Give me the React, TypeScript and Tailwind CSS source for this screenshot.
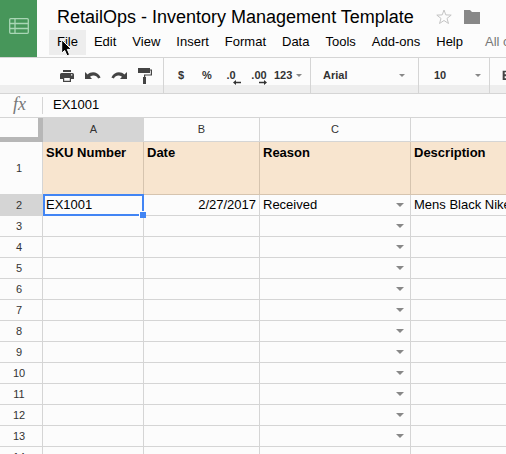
import React from "react";
import { MdFormatBold } from "react-icons/md";

interface RowItem {
  id: number;
  sku?: string;
  date?: string;
  reason?: string;
  description?: string;
}

const menuItems = ["File", "Edit", "View", "Insert", "Format", "Data", "Tools", "Add-ons", "Help"];

const rows: RowItem[] = [
  { id: 2, sku: "EX1001", date: "2/27/2017", reason: "Received", description: "Mens Black Nike Shoes" },
  ...Array.from({ length: 13 }, (_, i) => ({ id: i + 3 })),
];

const cell = "relative border-r border-b border-[#d5d5d5] p-0 px-[3px] whitespace-nowrap";
const titleCell = "border-r border-b border-[#d6c4af] bg-[#f8e5cf] p-0 px-[3px] pt-px text-left align-top font-bold";
const toolButton = "flex h-6 w-[26px] items-center justify-center";

const Caret: React.FC<{ className?: string }> = ({ className }) => (
  <svg className={className} viewBox="0 0 8 4" aria-hidden="true">
    <path d="M0 0h8L4 4z" fill="currentColor" />
  </svg>
);

const Header: React.FC = () => (
  <header className="flex h-[58px] shrink-0 border-b border-[#d5d5d5]">
    <a href="#home" aria-label="Sheets home" className="flex w-[37px] shrink-0 justify-center bg-[#47965a] pt-[18px]">
      <svg width="20" height="16" viewBox="0 0 20 16" fill="none" stroke="#a9d6b5" strokeWidth="1.3">
        <rect x="0.7" y="0.7" width="18.6" height="14.6" rx="1" />
        <path d="M1 5.500h18M1 10.500h18M6 1v14" />
      </svg>
    </a>
    <div className="min-w-0 flex-1 pl-3">
      {/* Document name */}
      <div className="flex h-[30px] items-center pt-1 pl-2">
        <h1 className="text-[18px] leading-6 whitespace-nowrap">RetailOps - Inventory Management Template</h1>
        <button type="button" aria-label="Star" className="ml-[22px] shrink-0">
          <svg width="16" height="16" viewBox="0 0 16 16" fill="none" stroke="#c4c4c4" strokeWidth="1">
            <path d="M8 1l1.800 4.900 5.400.2-4.200 3.300 1.500 5.100L8 11.500l-4.500 3 1.500-5.100L.8 6.100l5.400-.2z" />
          </svg>
        </button>
        <button type="button" aria-label="Move to folder" className="ml-3 shrink-0">
          <svg width="16" height="14" viewBox="0 0 16 14" fill="#888">
            <path d="M0 0h6l2 2h8v12H0z" />
          </svg>
        </button>
      </div>

      {/* Menu bar */}
      <nav className="flex h-[25px] items-stretch text-[13px]">
        {menuItems.map((item, index) => (
          <button
            key={item}
            type="button"
            className={
              index === 0
                ? "relative shrink-0 bg-[#ededed] px-2 pb-[2px]"
                : "shrink-0 px-2 pb-[2px] whitespace-nowrap"
            }
          >
            {item}
            {index === 0 && (
              <svg className="absolute top-[9px] left-3" width="12" height="18" viewBox="0 0 12 18" aria-hidden="true">
                <path
                  d="M.7.8v13.4l3-2.8 2.3 5.4 2.6-1.1-2.3-5.3h4.2z"
                  fill="#000"
                  stroke="#fff"
                  strokeWidth="1"
                />
              </svg>
            )}
          </button>
        ))}
        <a href="#history" className="flex items-center pb-[2px] pl-[14px] whitespace-nowrap text-[#777]">
          All changes saved in Drive
        </a>
      </nav>
    </div>
  </header>
);

const Toolbar: React.FC = () => (
  <div className="flex h-9 shrink-0 border-b border-[#d5d5d5] bg-[linear-gradient(to_bottom,#fcfcfc_27px,#eee_27px)] text-[11px] font-bold text-[#333]">
    <div className="flex w-[164px] shrink-0 items-center border-r border-[#d5d5d5] pl-[54px] text-[#444]">
      <button type="button" aria-label="Print" className={toolButton}>
        <svg width="14" height="12" viewBox="0 0 14 12" fill="currentColor">
          <path d="M3 0h8v2H3z" />
          <path fillRule="evenodd" d="M1.500 3h11Q14 3 14 4.500V9h-3V7H3v2H0V4.500Q0 3 1.500 3zM11 4.200v1.200h1.300V4.200z" />
          <path fillRule="evenodd" d="M3 7h8v5H3zM4.200 8v2.800h5.600V8z" />
        </svg>
      </button>
      <button type="button" aria-label="Undo" className={toolButton}>
        <svg width="16" height="8" viewBox="0 0 16 8" fill="currentColor">
          <path d="M0 0l2.600 2.400C6-.6 12.500-.8 15.600 5.400l-2.500 1C11.200 3 8 2.800 5 4.800L7 7H0z" />
        </svg>
      </button>
      <button type="button" aria-label="Redo" className={toolButton}>
        <svg width="16" height="8" viewBox="0 0 16 8" fill="currentColor">
          <path d="M16 0l-2.600 2.400C10-.6 3.500-.8.4 5.400l2.500 1C4.800 3 8 2.800 11 4.800L9 7h7z" />
        </svg>
      </button>
      <button type="button" aria-label="Paint format" className={toolButton}>
        <svg width="14" height="16" viewBox="0 0 14 16" fill="currentColor">
          <path d="M0 0h12v5H0z" />
          <path d="M12 2h1.400v5H6.600v3" fill="none" stroke="currentColor" strokeWidth="1.200" />
          <path d="M5 9h3v7H5z" />
        </svg>
      </button>
    </div>

    <div className="flex w-[147px] shrink-0 items-center border-r border-[#d5d5d5] pl-1">
      <button type="button" className={toolButton}>$</button>
      <button type="button" className={toolButton}>%</button>
      <button type="button" aria-label="Decrease decimal places" className={`${toolButton} relative`}>
        <span className="pr-1">.0</span>
        <svg className="absolute right-[5px] bottom-[3px]" width="8" height="5" viewBox="0 0 8 5" fill="currentColor">
          <path d="M0 2.500L3 0v1.800h5v1.400H3V5z" />
        </svg>
      </button>
      <button type="button" aria-label="Increase decimal places" className={`${toolButton} relative`}>
        <span>.00</span>
        <svg className="absolute right-[5px] bottom-[3px]" width="8" height="5" viewBox="0 0 8 5" fill="currentColor">
          <path d="M8 2.500L5 0v1.800H0v1.400h5V5z" />
        </svg>
      </button>
      <button type="button" className="flex items-center gap-1 pl-[2px]">
        123
        <Caret className="h-[3px] w-[6px] text-[#888]" />
      </button>
    </div>

    <div className="relative flex w-[108px] shrink-0 items-center border-r border-[#d5d5d5]">
      <select aria-label="Font" defaultValue="Arial" className="h-6 w-full appearance-none bg-transparent pl-3">
        <option>Arial</option>
        <option>Georgia</option>
      </select>
      <Caret className="pointer-events-none absolute right-[13px] h-[3px] w-[6px] text-[#888]" />
    </div>

    <div className="relative flex w-[71px] shrink-0 items-center border-r border-[#d5d5d5]">
      <select aria-label="Font size" defaultValue="10" className="h-6 w-full appearance-none bg-transparent pl-[15px]">
        <option>10</option>
        <option>12</option>
      </select>
      <Caret className="pointer-events-none absolute right-2 h-[3px] w-[6px] text-[#888]" />
    </div>

    <button type="button" aria-label="Bold" className="shrink-0 pl-2 text-[#444]">
      <MdFormatBold size={16} />
    </button>
  </div>
);

const FormulaBar: React.FC = () => (
  <div className="flex h-6 shrink-0 items-center border-b border-[#d5d5d5]">
    <label
      htmlFor="formula"
      className="w-[42px] shrink-0 pb-1 pl-[13px] font-['Liberation_Serif',serif] text-[18px] leading-5 text-[#777] italic"
    >
      fx
    </label>
    <input
      id="formula"
      defaultValue="EX1001"
      className="h-[17px] min-w-0 flex-1 border-l border-[#d5d5d5] bg-transparent pb-[2px] pl-[10px] text-[13px] outline-none"
    />
  </div>
);

const Sheet: React.FC = () => (
  <table className="w-full min-w-[700px] table-fixed border-separate border-spacing-0 text-[13px] leading-5">
    <colgroup>
      <col className="w-[43px]" />
      <col className="w-[101px]" />
      <col className="w-[116px]" />
      <col className="w-[151px]" />
      <col />
    </colgroup>
    <thead>
      <tr className="h-6 text-[11px] text-[#333]">
        <td className="border-r-[5px] border-b-[5px] border-[#b7b7b7] p-0" />
        <th scope="col" className="border-b border-[#d5d5d5] bg-[#d5d5d5] p-0 pb-[2px] font-normal">A</th>
        <th scope="col" className="border-r border-b border-[#d5d5d5] p-0 pb-[2px] font-normal">B</th>
        <th scope="col" className="border-r border-b border-[#d5d5d5] p-0 pb-[2px] font-normal">C</th>
        <th scope="col" className="border-r border-b border-[#d5d5d5] p-0 pb-[2px] font-normal">D</th>
      </tr>
    </thead>
    <tbody>
      <tr className="h-[53px]">
        <th scope="row" className="border-r border-b border-[#d5d5d5] p-0 pr-1 text-[11px] font-normal text-[#333]">1</th>
        <td className={titleCell}>SKU Number</td>
        <td className={titleCell}>Date</td>
        <td className={titleCell}>Reason</td>
        <td className={titleCell}>Description</td>
      </tr>
      {rows.map((row) => (
        <tr key={row.id} className="h-[21px]">
          <th
            scope="row"
            className={`border-r border-b border-[#d5d5d5] p-0 pr-1 text-[11px] font-normal text-[#333] ${row.id === 2 ? "bg-[#d5d5d5]" : ""}`}
          >
            {row.id}
          </th>
          <td className={cell}>
            {row.sku}
            {/* Active cell outline with its fill handle */}
            {row.id === 2 && (
              <span className="absolute -top-px -right-px -bottom-px left-0 z-10 border-2 border-[#4285f4]">
                <span className="absolute -right-1 -bottom-1 h-[7px] w-[7px] border-t border-l border-white bg-[#4285f4]" />
              </span>
            )}
          </td>
          <td className={`${cell} text-right`}>{row.date}</td>
          <td className={cell}>
            <div className="flex items-center justify-between">
              <span>{row.reason}</span>
              <button type="button" aria-label={`Choose reason for row ${row.id}`} className="flex h-5 items-center pr-[3px]">
                <Caret className="h-1 w-2 text-[#888]" />
              </button>
            </div>
          </td>
          <td className={cell}>{row.description}</td>
        </tr>
      ))}
    </tbody>
  </table>
);

const App: React.FC = () => {
  return (
    <div className="flex h-screen flex-col overflow-hidden bg-[#fcfcfc] font-['Liberation_Sans',Arial,sans-serif] text-black">
      <Header />
      <Toolbar />
      <FormulaBar />
      <main className="min-h-0 flex-1 overflow-hidden">
        <Sheet />
      </main>
    </div>
  );
};

export default App;
